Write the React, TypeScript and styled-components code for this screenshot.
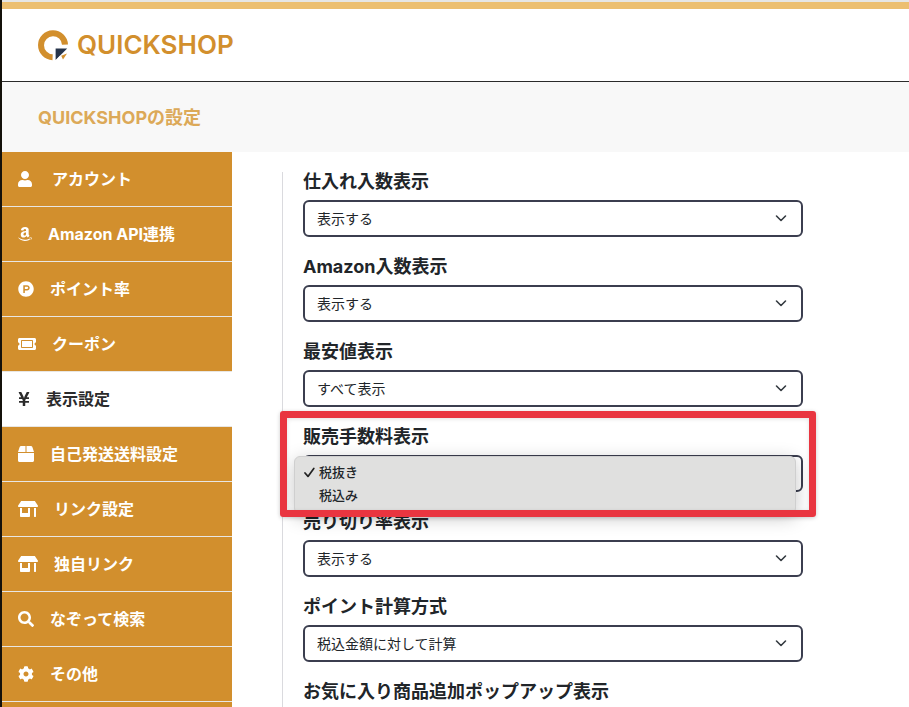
import React from "react";
import styled, { createGlobalStyle } from "styled-components";
import type { IconType } from "react-icons";
import {
  FaUser,
  FaAmazon,
  FaProductHunt,
  FaTicketAlt,
  FaYenSign,
  FaBox,
  FaStoreAlt,
  FaSearch,
  FaCog,
} from "react-icons/fa";

const GlobalStyle = createGlobalStyle`
  *, *::before, *::after { box-sizing: border-box; }
  body {
    margin: 0;
    background: #ffffff;
    color: #212529;
    font-family: Inter, "Noto Sans CJK JP", sans-serif;
  }
`;

const Page = styled.div`
  display: flex;
  flex-direction: column;
  height: 100vh;
  overflow: hidden;
  border-left: 2px solid #14110a;
`;

const TopBar = styled.div`
  flex: none;
  height: 9px;
  background: #ecbf70;
  border-top: 2px solid #e6e6e4;
`;

const Header = styled.header`
  flex: none;
  display: flex;
  align-items: center;
  height: 73px;
  padding: 0 35px;
  border-bottom: 1px solid #2b2b2b;
`;

const Brand = styled.a`
  display: flex;
  align-items: center;
  gap: 8px;
  color: #d28f2d;
  font-size: 26px;
  font-weight: 600;
  line-height: 32px;
  text-decoration: none;
`;

const TitleBand = styled.div`
  flex: none;
  display: flex;
  align-items: center;
  height: 70px;
  padding: 2px 36px 0;
  background: #f8f8f8;
`;

const Title = styled.h1`
  margin: 0;
  color: #dca958;
  font-size: 18px;
  font-weight: 700;
  line-height: 24px;
`;

const Body = styled.div`
  flex: 1;
  display: flex;
  min-height: 0;
`;

const Sidebar = styled.nav`
  flex: none;
  width: 230px;
  background: #d28f2d;
`;

const NavLink = styled.a<{ $active?: boolean }>`
  display: flex;
  align-items: center;
  gap: 16px;
  height: 55px;
  padding: 0 16px;
  border-bottom: 1px solid #e8e6e3;
  background: ${(p) => (p.$active ? "#ffffff" : "#d28f2d")};
  color: ${(p) => (p.$active ? "#2b2b2b" : "#ffffff")};
  font-size: 16px;
  font-weight: 700;
  line-height: 24px;
  text-decoration: none;
`;

const NavIcon = styled.span<{ $width: number; $slot: number }>`
  display: flex;
  width: ${(p) => p.$slot}px;

  svg {
    width: ${(p) => p.$width}px;
    height: 16px;
  }
`;

const Main = styled.main`
  flex: 1;
  padding: 20px 50px 0;
`;

const Form = styled.form`
  display: flex;
  flex-direction: column;
  gap: 20px;
  min-height: 100%;
  padding-left: 20px;
  border-left: 1px solid #dadade;
`;

const Field = styled.div`
  position: relative;
  display: flex;
  flex-direction: column;
  gap: 8px;
  width: 100%;
  max-width: 500px;
`;

const Label = styled.label`
  font-size: 18px;
  font-weight: 700;
  line-height: 20px;
`;

const SelectBox = styled.div`
  position: relative;
`;

const Select = styled.select`
  display: block;
  width: 100%;
  height: 37px;
  padding: 0 36px 0 12px;
  appearance: none;
  border: 2px solid #3b3e4f;
  border-radius: 6px;
  background: #ffffff;
  color: #212529;
  font: 400 14px/20px Inter, "Noto Sans CJK JP", sans-serif;
`;

const Chevron = styled.svg`
  position: absolute;
  top: 12px;
  right: 16px;
  width: 12px;
  height: 12px;
  pointer-events: none;
`;

const Popup = styled.ul`
  position: absolute;
  z-index: 1;
  top: 29px;
  left: -9px;
  right: 7px;
  margin: 0;
  padding: 4px 9px 6px;
  list-style: none;
  border: 1px solid #cfcfcf;
  border-radius: 6px;
  background: #e0e0df;
  box-shadow: 0 4px 18px rgba(0, 0, 0, 0.22);
`;

const Option = styled.li`
  display: flex;
  align-items: center;
  gap: 4px;
  font-size: 13px;
  font-weight: 500;
  line-height: 23px;
`;

const CheckSlot = styled.svg`
  width: 11px;
  height: 11px;
`;

const Highlight = styled.div`
  position: absolute;
  z-index: 2;
  top: -16px;
  left: -23px;
  right: -13px;
  height: 106px;
  border: 7px solid #e93540;
  border-radius: 3px;
  box-shadow: 0 1px 4px rgba(0, 0, 0, 0.2), inset 0 1px 4px rgba(0, 0, 0, 0.12);
  pointer-events: none;
`;

type NavEntry = {
  label: string;
  icon: IconType;
  width: number;
  slot?: number;
  active?: boolean;
};

const navEntries: NavEntry[] = [
  { label: "アカウント", icon: FaUser, width: 14, slot: 18 },
  { label: "Amazon API連携", icon: FaAmazon, width: 14 },
  { label: "ポイント率", icon: FaProductHunt, width: 16 },
  { label: "クーポン", icon: FaTicketAlt, width: 18 },
  { label: "表示設定", icon: FaYenSign, width: 12, active: true },
  { label: "自己発送送料設定", icon: FaBox, width: 16 },
  { label: "リンク設定", icon: FaStoreAlt, width: 20 },
  { label: "独自リンク", icon: FaStoreAlt, width: 20 },
  { label: "なぞって検索", icon: FaSearch, width: 16 },
  { label: "その他", icon: FaCog, width: 16 },
];

type FieldEntry = { id: string; label: string; options?: string[]; open?: boolean };

const fields: FieldEntry[] = [
  { id: "purchase-count", label: "仕入れ入数表示", options: ["表示する"] },
  { id: "amazon-count", label: "Amazon入数表示", options: ["表示する"] },
  { id: "lowest-price", label: "最安値表示", options: ["すべて表示"] },
  { id: "sales-fee", label: "販売手数料表示", options: ["税抜き", "税込み"], open: true },
  { id: "sell-through", label: "売り切り率表示", options: ["表示する"] },
  { id: "point-method", label: "ポイント計算方式", options: ["税込金額に対して計算"] },
  { id: "favorite-popup", label: "お気に入り商品追加ポップアップ表示", options: ["表示する"] },
];

function Logo() {
  return (
    <svg width="32" height="32" viewBox="0 0 32 32" aria-hidden="true">
      <path
        d="M28 15.6A12 12 0 1 0 15.6 28.2"
        fill="none"
        stroke="#d28f2d"
        strokeWidth="6"
      />
      <path d="M18.6 19.4H30.2L18.6 31Z" fill="#26344a" />
      <path d="M24.2 26.8L30 24.4L26 30.6Z" fill="#d28f2d" />
      <path d="M19.2 31L23.2 26.6L24.6 30.6Z" fill="#ffffff" />
    </svg>
  );
}

function OptionPopup({ options }: { options: string[] }) {
  return (
    <Popup role="listbox">
      {options.map((option, i) => (
        <Option key={option} role="option" aria-selected={i === 0}>
          <CheckSlot viewBox="0 0 11 11" aria-hidden="true">
            {i === 0 && (
              <path
                d="M1 6L4 9.4L9.8 1.4"
                fill="none"
                stroke="#222222"
                strokeWidth="1.7"
                strokeLinecap="round"
                strokeLinejoin="round"
              />
            )}
          </CheckSlot>
          {option}
        </Option>
      ))}
    </Popup>
  );
}

function SettingField({ id, label, options = [], open }: FieldEntry) {
  return (
    <Field>
      <Label htmlFor={id}>{label}</Label>
      <SelectBox>
        <Select id={id}>
          {options.map((option) => (
            <option key={option}>{option}</option>
          ))}
        </Select>
        <Chevron viewBox="0 0 12 12" aria-hidden="true">
          <path
            d="M1.5 4L6 8.5L10.5 4"
            fill="none"
            stroke="#343a40"
            strokeWidth="1.6"
            strokeLinecap="round"
            strokeLinejoin="round"
          />
        </Chevron>
      </SelectBox>
      {open && <OptionPopup options={options} />}
      {open && <Highlight />}
    </Field>
  );
}

export default function App() {
  return (
    <>
      <GlobalStyle />
      <Page>
        <TopBar />
        <Header>
          <Brand href="#">
            <Logo />
            QUICKSHOP
          </Brand>
        </Header>
        <TitleBand>
          <Title>QUICKSHOPの設定</Title>
        </TitleBand>
        <Body>
          <Sidebar>
            {navEntries.map(({ label, icon: Icon, width, slot, active }) => (
              <NavLink key={label} href="#" $active={active}>
                <NavIcon $width={width} $slot={slot ?? width}>
                  <Icon aria-hidden="true" />
                </NavIcon>
                {label}
              </NavLink>
            ))}
          </Sidebar>
          <Main>
            <Form>
              {fields.map((field) => (
                <SettingField key={field.id} {...field} />
              ))}
            </Form>
          </Main>
        </Body>
      </Page>
    </>
  );
}
